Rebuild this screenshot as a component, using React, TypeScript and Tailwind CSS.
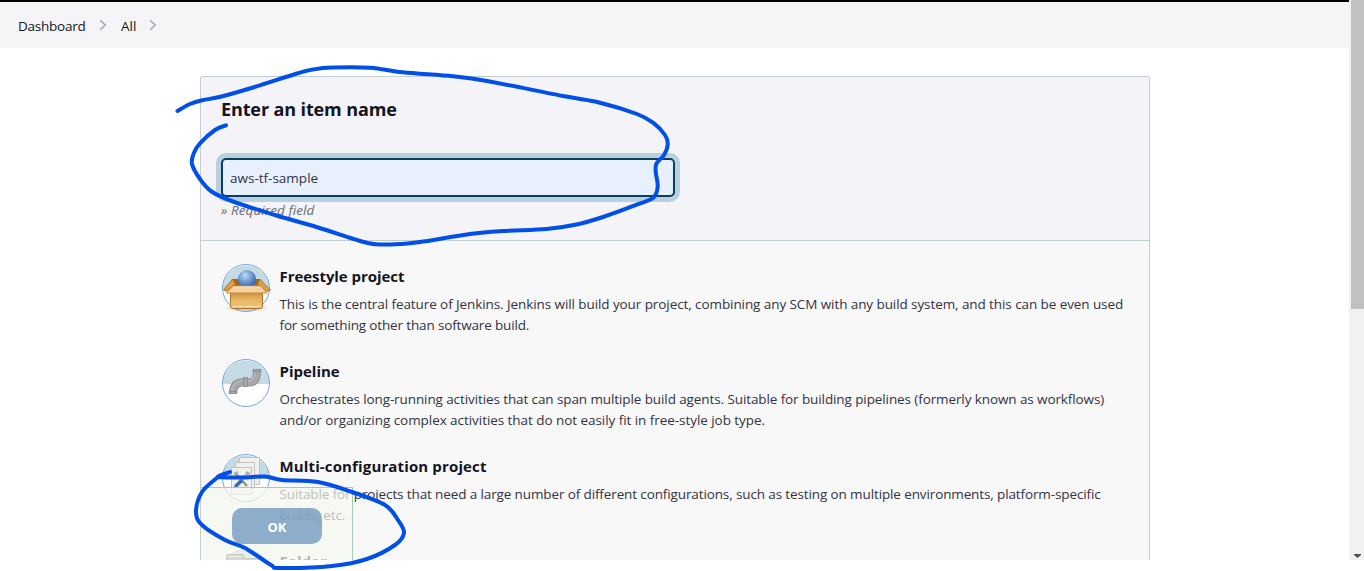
import type { ReactNode } from "react";

type Point = [number, number];

const FIELD_LOOP: Point[] = [
  [177.5, 111], [190, 104], [201, 100.5], [221.5, 96.5], [253, 87.5], [297, 73.5], [313, 69.5], [332, 67.5],
  [370, 67.7], [403, 72.3], [453, 76.3], [487, 81], [563, 96], [600, 102.7], [637, 114], [653, 122.7],
  [665, 135], [667.7, 144.5], [664, 155], [656.5, 163.5], [655.7, 171.7], [657.7, 186.7], [653.5, 197.5],
  [636.7, 204.7], [603, 217], [576.5, 224.5], [546.5, 229], [503, 231], [470, 234], [420, 242], [400, 244],
  [376.5, 244.3], [360, 241], [316.5, 227], [276.5, 215.5], [233, 201.5], [211.5, 191.5], [200, 179],
  [192, 164], [194, 152.7], [200, 143.3], [215, 130], [226, 125.3],
];

const OK_LOOP: Point[] = [
  [230, 472], [218, 477], [242, 477.5], [265, 476.5], [282, 480], [318, 482], [352, 492], [385, 505], [398, 520],
  [404, 533], [395, 545], [367, 559], [332, 566], [280, 568], [271, 565], [245, 548], [225, 540], [202, 525],
  [196, 512], [202, 492], [218, 477],
];

function smooth(p: Point[]) {
  let d = `M${p[0][0]} ${p[0][1]}`;
  for (let i = 0; i < p.length - 1; i++) {
    const a = p[i - 1] ?? p[i];
    const b = p[i];
    const c = p[i + 1];
    const e = p[i + 2] ?? c;
    d += `C${b[0] + (c[0] - a[0]) / 6} ${b[1] + (c[1] - a[1]) / 6} ${c[0] - (e[0] - b[0]) / 6} ${c[1] - (e[1] - b[1]) / 6} ${c[0]} ${c[1]}`;
  }
  return d;
}

function Chevron() {
  return (
    <svg className="mb-[3px] h-3 w-2" viewBox="0 0 8 12" fill="none" stroke="#a4a4b4" strokeWidth="1.5">
      <path d="M1.2 1.2 6.2 6 1.2 10.8" />
    </svg>
  );
}

function Disc({ children }: { children: ReactNode }) {
  return (
    <svg className="size-12 shrink-0 overflow-visible" viewBox="0 0 48 48">
      <circle cx="24" cy="24" r="23.5" fill="#fff" />
      <path d="M.5 25a23.5 23.5 0 1 1 47 0z" fill="#c5dbe4" />
      <circle cx="24" cy="24" r="23.5" fill="none" stroke="#7aa7dc" />
      {children}
    </svg>
  );
}

function BoxIcon() {
  return (
    <Disc>
      <defs>
        <radialGradient id="ball" cx=".4" cy=".3" r=".7">
          <stop offset="0" stopColor="#c3d8f2" />
          <stop offset=".55" stopColor="#6996cf" />
          <stop offset="1" stopColor="#3666ad" />
        </radialGradient>
        <linearGradient id="card" x2="0" y2="1">
          <stop offset="0" stopColor="#c98c35" />
          <stop offset=".45" stopColor="#e5b467" />
          <stop offset="1" stopColor="#f1c67f" />
        </linearGradient>
        <radialGradient id="shade">
          <stop offset="0" stopColor="#555" stopOpacity=".6" />
          <stop offset="1" stopColor="#777" stopOpacity="0" />
        </radialGradient>
      </defs>
      <ellipse cx="24.5" cy="44" rx="22" ry="4" fill="url(#shade)" />
      <path d="M10.5 15h28v11h-28z" fill="#9b671f" />
      <path d="M10.500 15 1.500 26l3 1 9-7zM37.500 15l11 11-3 1.500-10-7z" fill="#dca04b" stroke="#ae701d" />
      <circle cx="25" cy="15" r="9" fill="url(#ball)" />
      <path d="M8.500 28h32v14q0 2.500-2.500 2.500H11q-2.500 0-2.500-2.500z" fill="url(#card)" stroke="#b27420" />
      <path d="M10 42.500h29" stroke="#fae0ad" />
      <path d="M11 22h28l6 7H4.500z" fill="#f3d1a0" stroke="#c78a3a" />
      <path d="M11.500 23h27" stroke="#fce6c2" />
    </Disc>
  );
}

function PipeIcon() {
  return (
    <Disc>
      <path d="M11 34.500q0-10 8-11h9q7 0 7-12" fill="none" stroke="#858585" strokeWidth="8" />
      <path d="M11 34.500q0-10 8-11h9q7 0 7-12" fill="none" stroke="#a7a7a7" strokeWidth="6.400" />
      <path d="M10 33q0-9 8-11h9q6-1 6-10" fill="none" stroke="#b9b9b9" strokeWidth="1.500" />
      <path d="M7 32.500h8v2H7zM31 10.500h8v2h-8zM21.500 18.500h4v9h-4z" fill="#a8a8a8" stroke="#858585" strokeWidth=".8" />
    </Disc>
  );
}

function MatrixIcon() {
  return (
    <Disc>
      <g fill="#f0f0ee" stroke="#c2c4c0">
        <path d="M17.500 3.500h20v27h-20z" />
        <path d="M13.500 8.500h19v26h-19z" />
        <path d="M9.500 13.500h20v27h-20z" />
      </g>
      <path d="m14 20 11 12" stroke="#8d9296" strokeWidth="2.500" />
      <path d="m26 19-8 8" stroke="#b5b8bb" strokeWidth="3" />
      <path d="m19 27-5 5" stroke="#3668b3" strokeWidth="3.500" strokeLinecap="round" />
      <path d="m12 20 4-2M24 18l4 2" stroke="#a5aaae" strokeWidth="2" />
    </Disc>
  );
}

function FolderIcon() {
  return (
    <Disc>
      <path d="M4.500 7.500q0-2 2.500-2h13q2 0 2 2v2h14v20H4.500z" fill="#8f918f" stroke="#555755" />
      <path d="M6 7.500h14" stroke="#d9d9d9" />
    </Disc>
  );
}

type Item = { title: string; titleClass: string; icon: ReactNode; lines: [string, string][] };

const items: Item[] = [
  {
    title: "Freestyle project",
    titleClass: "tracking-[-0.06px]",
    icon: <BoxIcon />,
    lines: [
      ["This is the central feature of Jenkins. Jenkins will build your project, combining any SCM with any build system, and this can be even used", "tracking-[-0.085px]"],
      ["for something other than software build.", "tracking-[-0.15px]"],
    ],
  },
  {
    title: "Pipeline",
    titleClass: "tracking-[0px]",
    icon: <PipeIcon />,
    lines: [
      ["Orchestrates long-running activities that can span multiple build agents. Suitable for building pipelines (formerly known as workflows)", "tracking-[-0.1px]"],
      ["and/or organizing complex activities that do not easily fit in free-style job type.", "tracking-[-0.055px]"],
    ],
  },
  {
    title: "Multi-configuration project",
    titleClass: "tracking-[0.14px]",
    icon: <MatrixIcon />,
    lines: [
      ["Suitable for projects that need a large number of different configurations, such as testing on multiple environments, platform-specific", "tracking-[-0.12px]"],
      ["builds, etc.", "tracking-[-0.15px]"],
    ],
  },
  { title: "Folder", titleClass: "tracking-[0px]", icon: <FolderIcon />, lines: [] },
];

function ItemRow({ item }: { item: Item }) {
  return (
    <li className="flex h-[95px] gap-[9.5px]">
      {item.icon}
      <div className="whitespace-nowrap">
        <h3 className={`h-[30px] text-[15px] leading-[25px] font-bold text-[#14141f] ${item.titleClass}`}>{item.title}</h3>
        {item.lines.map(([text, spacing]) => (
          <p key={text} className={`text-[13.5px] leading-[21px] text-[#333342] ${spacing}`}>{text}</p>
        ))}
      </div>
    </li>
  );
}

export default function App() {
  return (
    <div className="relative h-[571px] w-[1364px] overflow-hidden bg-white font-['Open_Sans','Noto_Sans',sans-serif] text-[#14141f]">
      <div className="flex h-[560px]">
        <main className="w-[1349px] overflow-hidden">
          <nav className="flex h-12 items-center border-t-2 border-black bg-[#f5f5f8] pt-[3px] pl-[18px] text-[13.5px]">
            <span className="w-[81px] tracking-[-0.25px]">Dashboard</span>
            <Chevron />
            <span className="ml-[14px] w-[28px] tracking-[0px]">All</span>
            <Chevron />
          </nav>
          <div className="relative mt-7 ml-[200px] h-[484px] w-[950px] overflow-hidden rounded-t-[3px] border border-b-0 border-[#c3cdd2] bg-[#f8f8f8]">
            <section className="h-[164px] border-b border-[#c3cdd2] bg-[#f3f3f8] px-5 pt-[19px]">
              <h1 className="h-[62px] text-[18px] leading-[26px] font-bold tracking-[-0.12px]">Enter an item name</h1>
              <div className="flex h-[39px] w-[454px] items-center rounded-[5px] border-2 border-[#0b3f60] bg-[#e8f0fe] px-[7px] pt-[2px] text-[13.5px] tracking-[0px] text-[#333342] shadow-[0_0_0_5px_#b9d0e1]">
                aws-tf-sample
              </div>
              <p className="mt-[3px] text-[13.5px] leading-5 tracking-[0.08px] text-[#6a6a6e] italic">» Required field</p>
            </section>
            <ul className="pt-[23px] pl-[21px]">
              {items.map((item) => (
                <ItemRow key={item.title} item={item} />
              ))}
            </ul>
            <div className="absolute bottom-0 left-0 h-[73px] w-[152px] border-t border-r border-[#a3cbb8] bg-[#f5faf0]/70 pt-5 pl-[31px]">
              <button className="flex h-9 w-[90px] items-center justify-center rounded-[10px] bg-[#739ac0]/80 pt-[3px] text-[13px] font-bold text-white">OK</button>
            </div>
          </div>
        </main>
        <aside className="flex w-[15px] flex-col justify-between bg-[#f1f1f1] pl-[2px]">
          <div className="h-[309px] bg-[#c1c1c1]" />
          <svg className="mb-[2px] ml-[3px] h-1 w-[7px]" viewBox="0 0 7 4" fill="#505050">
            <path d="M0 0h7v1L3.500 4 0 1z" />
          </svg>
        </aside>
      </div>
      <svg className="pointer-events-none absolute inset-0" width="1364" height="571" fill="none" stroke="#0050e8" strokeWidth="4" strokeLinecap="round" strokeLinejoin="round">
        <path d={smooth(FIELD_LOOP)} />
        <path d={smooth(OK_LOOP)} />
      </svg>
    </div>
  );
}
